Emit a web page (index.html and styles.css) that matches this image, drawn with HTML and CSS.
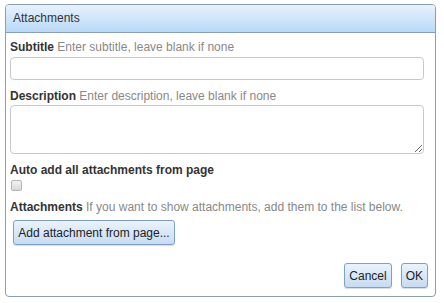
FILE: index.html
```html
<!DOCTYPE html>
<html lang="en">
<head>
    <meta charset="UTF-8">
    <title>Attachments</title>
    <link rel="stylesheet" href="styles.css">
</head>
<body>
    <div class="dialog">
        <div class="dialog-header">Attachments</div>
        <div class="dialog-body">
            <div class="field">
                <label class="field-label"><b>Subtitle</b> <span class="hint">Enter subtitle, leave blank if none</span></label>
                <input type="text" class="text-input">
            </div>
            <div class="field">
                <label class="field-label"><b>Description</b> <span class="hint">Enter description, leave blank if none</span></label>
                <textarea class="text-area"></textarea>
            </div>
            <div class="field">
                <label class="field-label"><b>Auto add all attachments from page</b></label>
                <input type="checkbox" class="check">
            </div>
            <div class="field">
                <label class="field-label"><b>Attachments</b> <span class="hint">If you want to show attachments, add them to the list below.</span></label>
                <button type="button" class="btn btn-add">Add attachment from page...</button>
            </div>
        </div>
        <div class="dialog-footer">
            <button type="button" class="btn">Cancel</button>
            <button type="button" class="btn">OK</button>
        </div>
    </div>
</body>
</html>
```

FILE: styles.css
```css
body {
    margin: 0;
    background: #fff;
    font-family: "Liberation Sans", Arial, sans-serif;
    font-size: 12px;
    color: #333;
}
.dialog {
    margin: 4px 0 0 5px;
    width: 429px;
    height: 291px;
    border: 1px solid #8a9eb3;
    border-radius: 4px;
    display: flex;
    flex-direction: column;
    overflow: hidden;
}
.dialog-header {
    height: 27px;
    line-height: 27px;
    padding-left: 7px;
    border-bottom: 1px solid #8a9eb3;
    background: linear-gradient(#e8f2fc, #b8d9f8);
    color: #333;
}
.dialog-body {
    padding: 7px 11px 0 4px;
    display: flex;
    flex-direction: column;
    gap: 9px;
}
.field {
    display: flex;
    flex-direction: column;
    align-items: flex-start;
}
.field-label {
    line-height: 15px;
    color: #333;
}
.hint {
    color: #888;
}
.text-input {
    margin-top: 2px;
    box-sizing: border-box;
    width: 414px;
    height: 23px;
    border: 1px solid #c8c8c8;
    border-radius: 4px;
    padding: 2px 4px;
    font: inherit;
}
.text-area {
    margin-top: 1px;
    box-sizing: border-box;
    width: 414px;
    height: 49px;
    border: 1px solid #c8c8c8;
    border-radius: 4px;
    padding: 2px 4px;
    font: inherit;
    resize: vertical;
}
.check {
    margin: 2px 0 0 1px;
    width: 11px;
    height: 11px;
    appearance: none;
    border: 1px solid #b5b5b5;
    border-radius: 2px;
    background: linear-gradient(#f3f3f3, #d8d8d8);
}
.btn {
    height: 25px;
    padding: 0 4px;
    border: 1px solid #7f9fc4;
    border-radius: 3px;
    background: linear-gradient(#eaf3fc, #c6dcf3);
    font-family: "Liberation Sans", Arial, sans-serif;
    font-size: 12px;
    color: #222;
    box-shadow: 0 1px 1px rgba(0, 0, 0, 0.15);
}
.btn-add {
    margin: 5px 0 0 3px;
    width: 162px;
}
.dialog-footer {
    margin-top: auto;
    display: flex;
    justify-content: flex-end;
    gap: 9px;
    padding: 0 7px 8px 0;
}
```
